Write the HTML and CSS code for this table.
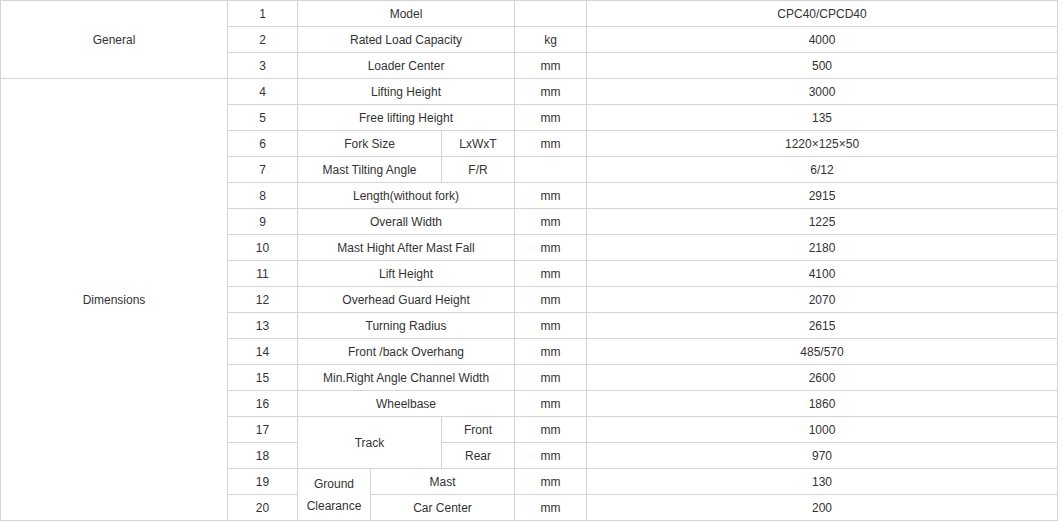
FILE: index.html
```html
<!DOCTYPE html>
<html>
<head>
<meta charset="utf-8">
<link rel="stylesheet" href="styles.css">
</head>
<body>
<table class="spec">
  <colgroup>
    <col class="c-group">
    <col class="c-no">
    <col class="c-pa">
    <col class="c-pb">
    <col class="c-pc">
    <col class="c-unit">
    <col class="c-val">
  </colgroup>
  <tbody>
    <tr><td rowspan="3">General</td><td>1</td><td colspan="3">Model</td><td></td><td>CPC40/CPCD40</td></tr>
    <tr><td>2</td><td colspan="3">Rated Load Capacity</td><td>kg</td><td>4000</td></tr>
    <tr><td>3</td><td colspan="3">Loader Center</td><td>mm</td><td>500</td></tr>
    <tr><td rowspan="17">Dimensions</td><td>4</td><td colspan="3">Lifting Height</td><td>mm</td><td>3000</td></tr>
    <tr><td>5</td><td colspan="3">Free lifting Height</td><td>mm</td><td>135</td></tr>
    <tr><td>6</td><td colspan="2">Fork Size</td><td>LxWxT</td><td>mm</td><td>1220×125×50</td></tr>
    <tr><td>7</td><td colspan="2">Mast Tilting Angle</td><td>F/R</td><td></td><td>6/12</td></tr>
    <tr><td>8</td><td colspan="3">Length(without fork)</td><td>mm</td><td>2915</td></tr>
    <tr><td>9</td><td colspan="3">Overall Width</td><td>mm</td><td>1225</td></tr>
    <tr><td>10</td><td colspan="3">Mast Hight After Mast Fall</td><td>mm</td><td>2180</td></tr>
    <tr><td>11</td><td colspan="3">Lift Height</td><td>mm</td><td>4100</td></tr>
    <tr><td>12</td><td colspan="3">Overhead Guard Height</td><td>mm</td><td>2070</td></tr>
    <tr><td>13</td><td colspan="3">Turning Radius</td><td>mm</td><td>2615</td></tr>
    <tr><td>14</td><td colspan="3">Front /back Overhang</td><td>mm</td><td>485/570</td></tr>
    <tr><td>15</td><td colspan="3">Min.Right Angle Channel Width</td><td>mm</td><td>2600</td></tr>
    <tr><td>16</td><td colspan="3">Wheelbase</td><td>mm</td><td>1860</td></tr>
    <tr><td>17</td><td colspan="2" rowspan="2">Track</td><td>Front</td><td>mm</td><td>1000</td></tr>
    <tr><td>18</td><td>Rear</td><td>mm</td><td>970</td></tr>
    <tr><td>19</td><td rowspan="2" class="wrap">Ground Clearance</td><td colspan="2">Mast</td><td>mm</td><td>130</td></tr>
    <tr><td>20</td><td colspan="2">Car Center</td><td>mm</td><td>200</td></tr>
  </tbody>
</table>
</body>
</html>
```

FILE: styles.css
```css
html, body {
  margin: 0;
  padding: 0;
  background: #ffffff;
}

.spec {
  border-collapse: collapse;
  table-layout: fixed;
  width: 1057px;
  font-family: "Liberation Sans", Arial, sans-serif;
  font-size: 12px;
  color: #333333;
}

.c-group { width: 227px; }
.c-no { width: 70px; }
.c-pa { width: 73px; }
.c-pb { width: 71px; }
.c-pc { width: 73px; }
.c-unit { width: 72px; }
.c-val { width: 471px; }

.spec td {
  border: 1px solid #d4d4d4;
  height: 24px;
  padding: 1px 0 0;
  text-align: center;
  vertical-align: middle;
  line-height: 22px;
}

.spec tr {
  height: 26px;
}

.spec td.wrap {
  padding: 0 4px;
}
```
